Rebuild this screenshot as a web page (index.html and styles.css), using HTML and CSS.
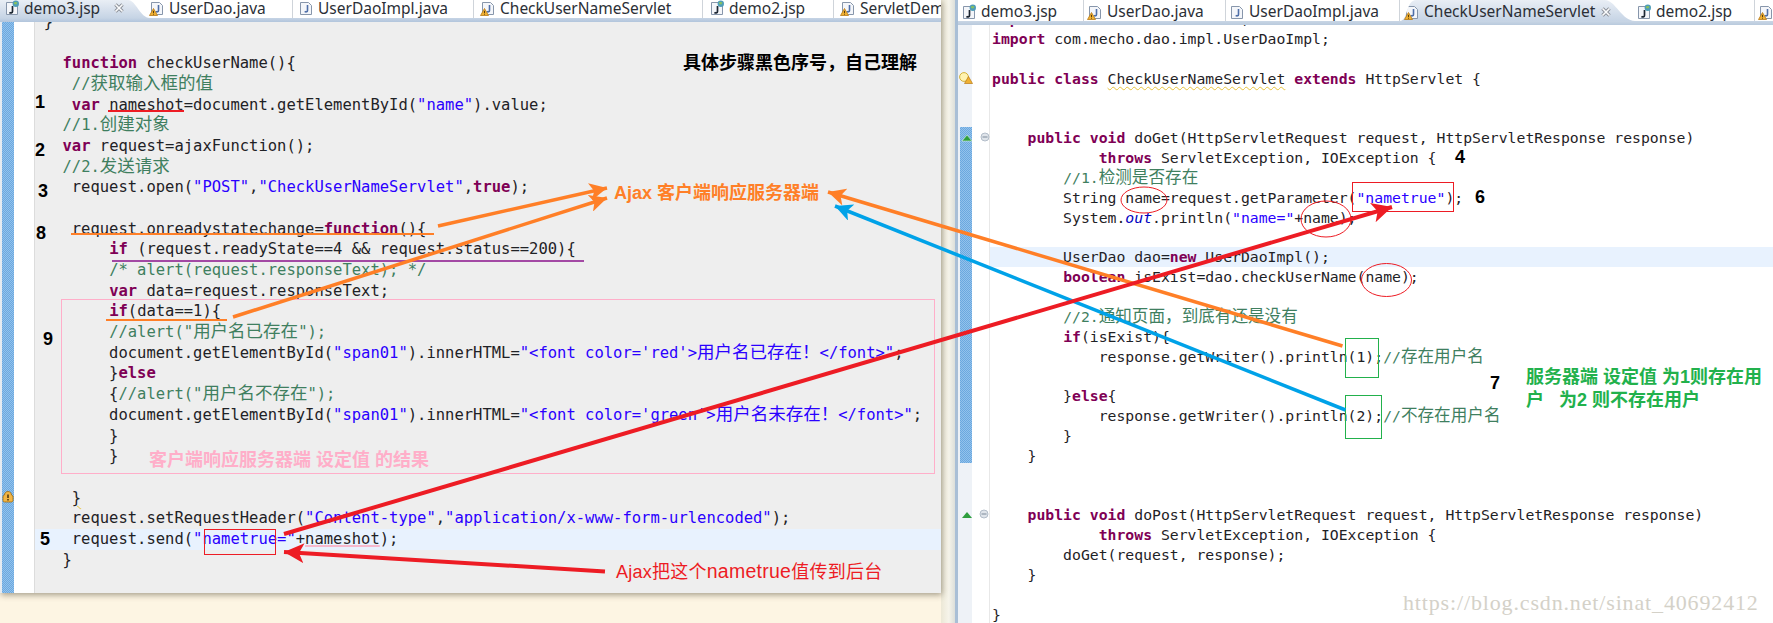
FILE: index.html
```html
<!DOCTYPE html>
<html lang="zh">
<head>
<meta charset="utf-8">
<title>demo3.jsp / CheckUserNameServlet</title>
<link rel="stylesheet" href="styles.css">
</head>
<body>
<svg class="defs" width="0" height="0" aria-hidden="true">
  <defs>
    <symbol id="page" viewBox="0 0 16 16">
      <path d="M2.5 2.5h8l3 3v9h-11z" fill="#f4f6fa" stroke="#8796ab"/>
    </symbol>
    <symbol id="jsp" viewBox="0 0 16 16">
      <use href="#page" width="16" height="16"/>
      <path d="M8.5 6v5.5c0 1.6-2 1.8-3 .8" fill="none" stroke="#1d2733" stroke-width="1.7"/>
      <circle cx="11.8" cy="3.8" r="3.2" fill="#4f9db8"/>
      <path d="M10 2.6c1-.9 2.6-.9 3.4.2l-1.2 1.6-2-.3z" fill="#8cc25a"/>
    </symbol>
    <symbol id="java" viewBox="0 0 16 16">
      <use href="#page" width="16" height="16"/>
      <path d="M9.5 5v5.5c0 1.5-1.8 1.7-2.8.8" fill="none" stroke="#4f6fa8" stroke-width="1.6"/>
    </symbol>
    <symbol id="javaw" viewBox="0 0 16 16">
      <use href="#java" width="16" height="16"/>
      <path d="M4.5 8.5l4 7h-8z" fill="#f0b132" stroke="#b97a16" stroke-width=".8"/>
      <path d="M4.5 10.8v2.3M4.5 13.8v.8" stroke="#5a3c08" stroke-width="1"/>
    </symbol>
    <symbol id="close" viewBox="0 0 12 12">
      <path d="M2.5 2.5l7 7M9.5 2.5l-7 7" stroke="#8b9098" stroke-width="3.4"/>
      <path d="M2.5 2.5l7 7M9.5 2.5l-7 7" stroke="#fbfcfd" stroke-width="1.6"/>
    </symbol>
    <marker id="h-orange" viewBox="0 0 8 8" refX="8" refY="4" markerWidth="5" markerHeight="5" orient="auto-start-reverse"><path d="M0 0L8 4L0 8L2 4z" fill="#ff7f27"/></marker>
    <marker id="h-blue" viewBox="0 0 8 8" refX="8" refY="4" markerWidth="5" markerHeight="5" orient="auto-start-reverse"><path d="M0 0L8 4L0 8L2 4z" fill="#00a2e8"/></marker>
    <marker id="h-red" viewBox="0 0 8 8" refX="8" refY="4" markerWidth="5" markerHeight="5" orient="auto-start-reverse"><path d="M0 0L8 4L0 8L2 4z" fill="#ed1c24"/></marker>
  </defs>
</svg>

<div class="workspace">
  <section class="pane pane-left">
    <div class="tabbar">
      <div class="tabs tabs-left">
        <div class="tab active al w-l1"><svg class="ico"><use href="#jsp"/></svg><span>demo3.jsp</span><svg class="x"><use href="#close"/></svg></div>
        <div class="tab w-l2"><svg class="ico"><use href="#javaw"/></svg><span>UserDao.java</span></div>
        <div class="tab w-l3"><svg class="ico"><use href="#java"/></svg><span>UserDaoImpl.java</span></div>
        <div class="tab w-l4"><svg class="ico"><use href="#javaw"/></svg><span>CheckUserNameServlet</span></div>
        <div class="tab w-l5"><svg class="ico"><use href="#jsp"/></svg><span>demo2.jsp</span></div>
        <div class="tab w-l6"><svg class="ico"><use href="#javaw"/></svg><span>ServletDem</span></div>
      </div>
      <div class="band band-left"></div>
    </div>
    <div class="editor">
      <div class="ruler ruler-left"><div class="stripe stripe-full"></div></div>
      <div class="gutter gutter-left"></div>
      <pre class="code code-left"><div class="l">}</div><div class="l"></div><div class="l">  <b>function</b> checkUserName(){</div><div class="l">   <i class="c">//<u>获取输入框的值</u></i></div><div class="l">   <b>var</b> nameshot=document.getElementById(<i class="s">"name"</i>).value;</div><div class="l">  <i class="c">//1.<u>创建对象</u></i></div><div class="l">  <b>var</b> request=ajaxFunction();</div><div class="l">  <i class="c">//2.<u>发送请求</u></i></div><div class="l">   request.open(<i class="s">"POST"</i>,<i class="s">"CheckUserNameServlet"</i>,<b>true</b>);</div><div class="l"></div><div class="l">   request.onreadystatechange=<b>function</b>(){</div><div class="l">       <b>if</b> (request.readyState==4 &amp;&amp; request.status==200){</div><div class="l">       <i class="c">/* alert(request.responseText); */</i></div><div class="l">       <b>var</b> data=request.responseText;</div><div class="l">       <b>if</b>(data==1){</div><div class="l">       <i class="c">//alert("<u>用户名已存在</u>");</i></div><div class="l">       document.getElementById(<i class="s">"span01"</i>).innerHTML=<i class="s">"&lt;font color='red'&gt;<u>用户名已存在！</u>&lt;/font&gt;"</i>;</div><div class="l">       }<b>else</b></div><div class="l">       {<i class="c">//alert("<u>用户名不存在</u>");</i></div><div class="l">       document.getElementById(<i class="s">"span01"</i>).innerHTML=<i class="s">"&lt;font color='green'&gt;<u>用户名未存在！</u>&lt;/font&gt;"</i>;</div><div class="l">       }</div><div class="l">       }</div><div class="l"></div><div class="l">   <span class="squig">}</span></div><div class="l">   request.setRequestHeader(<i class="s">"Content-type"</i>,<i class="s">"application/x-www-form-urlencoded"</i>);</div><div class="l current">   request.send(<i class="s">"nametrue="</i>+<span class="occ">nameshot</span>);</div><div class="l">  }</div></pre>
    </div>
  </section>

  <div class="sash"></div>

  <section class="pane pane-right">
    <div class="tabbar">
      <div class="tabs tabs-right">
        <div class="tab rt w-r1"><svg class="ico"><use href="#jsp"/></svg><span>demo3.jsp</span></div>
        <div class="tab rt w-r2"><svg class="ico"><use href="#javaw"/></svg><span>UserDao.java</span></div>
        <div class="tab rt w-r3"><svg class="ico"><use href="#java"/></svg><span>UserDaoImpl.java</span></div>
        <div class="tab active ar w-r4"><svg class="ico"><use href="#javaw"/></svg><span>CheckUserNameServlet</span><svg class="x"><use href="#close"/></svg></div>
        <div class="tab w-r5"><svg class="ico"><use href="#jsp"/></svg><span>demo2.jsp</span></div>
        <div class="tab rt w-r6"><svg class="ico"><use href="#javaw"/></svg></div>
      </div>
      <div class="band band-right"></div>
    </div>
    <div class="editor">
      <div class="ruler ruler-right"><div class="stripe stripe-part"></div></div>
      <div class="gutter gutter-right"></div>
      <pre class="code code-right"><div class="l"><b>import</b> com.mecho.dao.UserDao;</div><div class="l"><b>import</b> com.mecho.dao.impl.UserDaoImpl;</div><div class="l"></div><div class="l"><b>public</b> <b>class</b> <span class="squig">CheckUserNameServlet</span> <b>extends</b> HttpServlet {</div><div class="l"></div><div class="l"></div><div class="l">    <b>public</b> <b>void</b> doGet(HttpServletRequest request, HttpServletResponse response)</div><div class="l">            <b>throws</b> ServletException, IOException {</div><div class="l">        <i class="c">//1.<u>检测是否存在</u></i></div><div class="l">        String name=request.getParameter(<i class="s">"nametrue"</i>);</div><div class="l">        System.<em>out</em>.println(<i class="s">"name="</i>+name);</div><div class="l"></div><div class="l current">        UserDao dao=<b>new</b> UserDaoImpl();</div><div class="l">        <b>boolean</b> isExist=dao.checkUserName(name);</div><div class="l"></div><div class="l">        <i class="c">//2.<u>通知页面，到底有还是没有</u></i></div><div class="l">        <b>if</b>(isExist){</div><div class="l">            response.getWriter().println(1);<i class="c">//<u>存在用户名</u></i></div><div class="l"></div><div class="l">        }<b>else</b>{</div><div class="l">            response.getWriter().println(2);<i class="c">//<u>不存在用户名</u></i></div><div class="l">        }</div><div class="l">    }</div><div class="l"></div><div class="l"></div><div class="l">    <b>public</b> <b>void</b> doPost(HttpServletRequest request, HttpServletResponse response)</div><div class="l">            <b>throws</b> ServletException, IOException {</div><div class="l">        doGet(request, response);</div><div class="l">    }</div><div class="l"></div><div class="l">}</div></pre>
    </div>
  </section>
</div>

<div class="overlay">
  <svg class="marks" width="1773" height="623" viewBox="0 0 1773 623">
    <!-- editor markers -->
    <path d="M962 141l5-6 5 6z" fill="#2e9e3e" stroke="#d8f0d8" stroke-width=".6"/>
    <path d="M962 518l5-6 5 6z" fill="#2e9e3e"/>
    <circle cx="985" cy="137" r="4" fill="#dfe4ea" stroke="#b3bdc9"/>
    <path d="M982.5 137h5" stroke="#7d8a99"/>
    <circle cx="984" cy="514" r="4" fill="#dfe4ea" stroke="#b3bdc9"/>
    <path d="M981.5 514h5" stroke="#7d8a99"/>
    <circle cx="964" cy="77" r="4.4" fill="#fff3b0" stroke="#d4b23a"/>
    <path d="M968.5 76.500l4 7h-8z" fill="#f0b132" stroke="#b97a16" stroke-width=".7"/>
    <path d="M8 491.500c2.500 0 3.500 2 3.500 3.500l1.500 1v4.500c0 1-1 1.500-2 1.500h-6c-1 0-2-.5-2-1.500V496l1.500-1c0-1.500 1-3.500 3.500-3.500z" fill="#f2b544" stroke="#9c6a12" stroke-width=".8"/>
    <path d="M8 494.500v3.500M8 499v1.500" stroke="#4a3008" stroke-width="1.500"/>

    <!-- underlines -->
    <line class="thin red" x1="108" y1="111" x2="184" y2="111"/>
    <line class="thin orange" x1="71" y1="234" x2="434" y2="234"/>
    <line class="thin purple" x1="112" y1="261" x2="584" y2="261"/>
    <line class="thin orange" x1="106" y1="320" x2="227" y2="320"/>

    <!-- boxes -->
    <rect class="box pink" x="61.500" y="299.500" width="873" height="174"/>
    <rect class="box redbox" x="204.500" y="529.500" width="71" height="25"/>
    <rect class="box redbox" x="1352.500" y="182.500" width="101" height="29"/>
    <rect class="box green" x="1345.500" y="338.500" width="33" height="39"/>
    <rect class="box green" x="1345.500" y="395.500" width="36" height="43"/>

    <!-- ellipses -->
    <ellipse class="box redbox" cx="1144" cy="200" rx="23" ry="13"/>
    <ellipse class="box redbox" cx="1326" cy="219" rx="25" ry="18"/>
    <ellipse class="box redbox" cx="1386.500" cy="280" rx="25" ry="16.500"/>

    <!-- arrows -->
    <line class="arrow a-orange" x1="438" y1="226" x2="607" y2="188"/>
    <line class="arrow a-orange" x1="233" y1="317" x2="607" y2="198"/>
    <line class="arrow a-orange" x1="1342.500" y1="346" x2="828" y2="192"/>
    <line class="arrow a-blue" x1="1345.500" y1="410" x2="835" y2="206"/>
    <line class="arrow a-red" x1="284" y1="534" x2="1392" y2="207"/>
    <line class="arrow a-red" x1="605" y1="571.500" x2="284" y2="552"/>
  </svg>

  <span class="num n1">1</span>
  <span class="num n2">2</span>
  <span class="num n3">3</span>
  <span class="num n8">8</span>
  <span class="num n9">9</span>
  <span class="num n5">5</span>
  <span class="num n4">4</span>
  <span class="num n6">6</span>
  <span class="num n7">7</span>

  <span class="note note-black">具体步骤黑色序号，自己理解</span>
  <span class="note note-orange">Ajax 客户端响应服务器端</span>
  <span class="note note-pink">客户端响应服务器端 设定值 的结果</span>
  <span class="note note-green">服务器端 设定值 为1则存在用<br>户&nbsp;&nbsp; 为2 则不存在用户</span>
  <span class="note note-red">Ajax把这个<span class="latin-wide">nametrue</span>值传到后台</span>
  <span class="watermark">https://blog.csdn.net/sinat_40692412</span>
</div>
</body>
</html>
```
FILE: styles.css
```css
* { box-sizing: border-box; }

html, body {
  margin: 0;
  width: 1773px;
  height: 623px;
  overflow: hidden;
}

body {
  position: relative;
  background: #fdf5e3;
  font-family: "Noto Sans", "Noto Sans CJK SC", sans-serif;
}

.defs { position: absolute; }

.workspace {
  display: flex;
  height: 623px;
}

.pane {
  display: flex;
  flex-direction: column;
  background: #fff;
  overflow: hidden;
}

.pane-left {
  width: 941px;
  height: 593px;
  box-shadow: 1px 2px 6px rgba(60, 50, 30, .45);
  position: relative;
  z-index: 1;
}

.pane-right {
  width: 818px;
  height: 623px;
  border-left: 3px solid #a9bfd6;
}

.sash {
  width: 14px;
  background: linear-gradient(90deg, #ece8d6, #f6f4ea 55%, #dcdfda);
}

/* tabs */
.tabbar { flex: none; background: #fff; }

.tabs {
  display: flex;
  overflow: hidden;
}

.tabs-left { height: 18px; }
.tabs-right { height: 21px; }

.tab {
  flex: none;
  display: flex;
  align-items: center;
  gap: 4px;
  font-size: 15.500px;
  line-height: 17px;
  color: #2b2f36;
  white-space: nowrap;
  overflow: hidden;
  border-right: 1px solid #cfd4da;
}

.tabs-left .tab { align-items: flex-start; }
.tabs-right .tab { padding-top: 2px; }

.tab.active {
  border-right: 0;
  background: linear-gradient(180deg, #e9eef5, #c6d4e5);
}

.al { clip-path: path("M0 0H128C136 0 140 18 150 18H0Z"); }
.ar { clip-path: path("M0 21C8 21 6 0 16 0H205C215 0 222 21 235 21Z"); }

.rt { border-left: 0; border-top-left-radius: 6px; }

.ico { flex: none; width: 16px; height: 16px; }
.x { flex: none; width: 12px; height: 12px; }
.tabs-left .x { margin: 2px 0 0 9px; }
.tabs-right .x { margin-left: 1px; }

.w-l1 { width: 150px; margin-right: -3px; padding-left: 4px; }
.w-l2 { width: 146px; padding-left: 2px; }
.w-l3 { width: 181px; padding-left: 5px; }
.w-l4 { width: 229px; padding-left: 6px; }
.w-l5 { width: 131px; padding-left: 6px; }
.w-l6 { width: 107px; padding-left: 6px; border-right: 0; }

.w-r1 { width: 126px; padding-left: 3px; }
.w-r2 { width: 142px; padding-left: 3px; }
.w-r3 { width: 174px; padding-left: 3px; }
.w-r4 { width: 235px; padding-left: 4px; }
.w-r5 { width: 120px; padding-left: 1px; }
.w-r6 { width: 18px; padding-left: 3px; border-right: 0; }

.band-left {
  height: 4px;
  background: linear-gradient(180deg, #c6d4e5, #b2c5dc);
}

.band-right {
  height: 4px;
  background: linear-gradient(180deg, #c9d6e5, #b9cadd);
}

/* editor */
.editor {
  flex: 1;
  display: flex;
  min-height: 0;
}

.ruler { flex: none; width: 14px; padding-left: 2px; }
.ruler-left { background: #e6ebf1; }
.ruler-right { background: #eef2f7; }

.stripe {
  width: 12px;
  background-color: #79b1e4;
  background-image: repeating-conic-gradient(#6ba8df 0 25%, #93c2ec 0 50%);
  background-size: 2px 2px;
}

.stripe-full { height: 100%; }
.stripe-part { height: 336px; margin-top: 102px; }

.gutter { flex: none; background: #fff; }
.gutter-left { width: 21px; border-right: 1px solid #dcdcdc; }
.gutter-right { width: 18px; border-right: 1px solid #e8e8e8; }

.code {
  flex: 1;
  margin: 0;
  min-width: 0;
  overflow: hidden;
  color: #1f2226;
  font-family: "DejaVu Sans Mono", "Noto Sans CJK SC", monospace;
}

.code-left {
  background: #eeeeee;
  font-size: 15.500px;
}

.code-left .l { height: 20.700px; line-height: 20.700px; padding-left: 8.800px; }
.code-left .l:first-child { margin-top: -10.250px; }
.code-left u { font-size: 17.500px; }

.code-right {
  background: #fff;
  font-size: 14.780px;
}

.code-right .l { height: 19.850px; line-height: 19.850px; padding-left: 2px; }
.code-right .l:first-child { margin-top: -15.700px; }
.code-right u { font-size: 16.600px; }

.code b { color: #7f0055; font-weight: 700; }
.code i { font-style: normal; }
.code u { text-decoration: none; line-height: 0; font-family: "Noto Sans CJK SC", sans-serif; }
.code .c { color: #3f7f5f; }
.code .s { color: #2a00ff; }
.code em { font-style: italic; color: #0000c0; }
.code .current { background: #e8f2fe; }

.squig {
  text-decoration: underline wavy #e6c23c 1px;
  text-underline-offset: 2px;
}

.occ { text-decoration: underline #f7b8cc 2px; text-underline-offset: 1px; }

/* annotations lying over the editors */
.overlay {
  position: absolute;
  inset: 0;
  z-index: 2;
  pointer-events: none;
}

.marks { position: absolute; left: 0; top: 0; }

.thin { stroke-width: 2; }
.red { stroke: #ed1c24; }
.orange { stroke: #ff7f27; }
.purple { stroke: #a349a4; }

.box { fill: none; stroke-width: 1; }
.pink { stroke: #ffaec9; }
.redbox { stroke: #ed1c24; }
.green { stroke: #22b14c; }

.arrow { stroke-width: 3.500; }
.a-orange { stroke: #ff7f27; marker-end: url(#h-orange); }
.a-blue { stroke: #00a2e8; marker-end: url(#h-blue); }
.a-red { stroke: #ed1c24; stroke-width: 4; marker-end: url(#h-red); }

.num {
  position: absolute;
  font: 700 18px/20px "Liberation Sans", sans-serif;
  color: #000;
}

.n1 { left: 35px; top: 92px; }
.n2 { left: 35px; top: 140px; }
.n3 { left: 38px; top: 181px; }
.n8 { left: 36px; top: 223px; }
.n9 { left: 43px; top: 329px; }
.n5 { left: 40px; top: 529px; }
.n4 { left: 1455px; top: 147px; }
.n6 { left: 1475px; top: 187px; }
.n7 { left: 1490px; top: 373px; }

.note {
  position: absolute;
  font: 700 18px/23px "Liberation Sans", "Noto Sans CJK SC", sans-serif;
  white-space: nowrap;
}

.note-black { left: 683px; top: 52px; color: #000; }
.note-orange { left: 614px; top: 182px; color: #ff7f27; }
.note-pink { left: 149px; top: 449px; color: #ffaec9; }
.note-green { left: 1526px; top: 366px; color: #22b14c; }
.note-red { left: 616px; top: 560px; color: #ed1c24; font-weight: 400; letter-spacing: .25px; }
.latin-wide { font-size: 19.500px; }

.watermark {
  position: absolute;
  left: 1403px;
  top: 591px;
  font: 400 22px/24px "Liberation Serif", serif;
  letter-spacing: .85px;
  color: #d4d1c8;
  white-space: nowrap;
}
```
